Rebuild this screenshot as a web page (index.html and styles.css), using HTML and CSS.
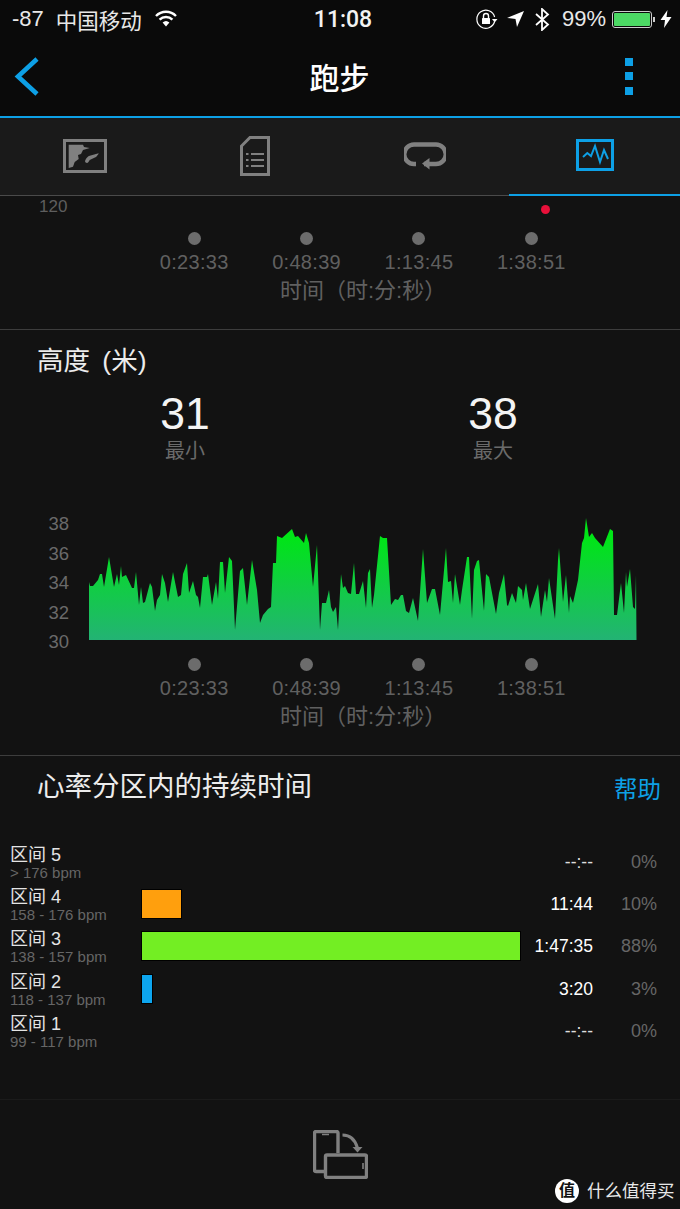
FILE: index.html
```html
<!DOCTYPE html>
<html lang="zh">
<head>
    <meta charset="UTF-8">
    <meta name="viewport" content="width=device-width, initial-scale=1.0">
    <title>跑步</title>
    <link rel="stylesheet" href="styles.css">
</head>
<body>

    <div class="top-bar">
        <div class="status">
            <div class="status-left">
                <span>-87</span>
                <span class="carrier">中国移动</span>
                <svg class="wifi" width="22" height="17" viewBox="0 0 22 17" fill="none" stroke="#fff" stroke-width="2.4">
                    <path d="M1 6 A14 14 0 0 1 21 6"/>
                    <path d="M4.6 9.6 A9 9 0 0 1 17.4 9.6"/>
                    <path d="M11 16.5 L7.6 12.6 A5 5 0 0 1 14.4 12.6 Z" fill="#fff" stroke="none"/>
                </svg>
            </div>
            <div class="status-time">11:08</div>
            <div class="status-right">
                <svg width="22" height="20" viewBox="0 0 22 20" fill="none" stroke="#fff" stroke-width="1.2">
                    <path d="M18.6 12.5 A9 9 0 1 1 18.6 8"/>
                    <path d="M16 10 L21.5 10 L18.7 13.4 Z" fill="#fff" stroke="none"/>
                    <path d="M7.5 9 V7 A2.5 2.5 0 0 1 12.5 7 V9" stroke-width="1.4"/>
                    <rect x="6" y="9" width="8" height="6" rx="0.5" fill="#fff" stroke="none"/>
                </svg>
                <svg class="loc" width="17" height="16" viewBox="0 0 17 16">
                    <path d="M17 0 L0 7 L8.5 8 L10 16 Z" fill="#fff"/>
                </svg>
                <svg class="bt" width="15" height="23" viewBox="0 0 15 23" fill="none" stroke="#fff" stroke-width="1.8">
                    <path d="M1 6 L13 16.5 L7 22 V1 L13 6.5 L1 17"/>
                </svg>
                <span class="battery-pct">99%</span>
                <div class="battery"><div class="battery-fill"></div></div>
                <svg class="bolt" width="12" height="18" viewBox="0 0 11 18">
                    <path d="M7 0 L0 10 H4.5 L3.5 18 L11 7 H6 Z" fill="#fff"/>
                </svg>
            </div>
        </div>
        <div class="nav">
            <svg class="back" width="26" height="41" viewBox="0 0 26 41" fill="none" stroke="#0da0e6" stroke-width="4.6">
                <path d="M23 3 L4 20.5 L23 38"/>
            </svg>
            <div class="nav-title">跑步</div>
            <div class="more"><i></i><i></i><i></i></div>
        </div>
    </div>

    <div class="tabs">
        <div class="tab">
            <svg width="44" height="34" viewBox="0 0 44 34">
                <rect x="1.5" y="1.5" width="41" height="31" fill="none" stroke="#808080" stroke-width="3"/>
                <path d="M5.7 5.7 H20 L21 8 L26.7 9 L20 11 L18 15 L15 16 L15.7 20 L11.7 23 L10 27.7 L5.7 29 Z" fill="#808080"/>
                <path d="M22 22 C23 19 25 17 26.7 16.7 L35.7 14.3 C35 16 34 17 33 18 L26.7 21 C26 22 25 24 24 24 C23 24 22 23 22 22 Z" fill="#808080"/>
            </svg>
        </div>
        <div class="tab">
            <svg width="30" height="40" viewBox="0 0 30 40" fill="none" stroke="#808080">
                <path d="M10 1.5 H28.5 V38.5 H1.5 V10 Z" stroke-width="3"/>
                <path d="M11 18 H24 M11 24 H24 M11 30 H24" stroke-width="2.2"/>
                <path d="M6 18 H8.5 M6 24 H8.5 M6 30 H8.5" stroke-width="2.2"/>
            </svg>
        </div>
        <div class="tab">
            <svg width="42" height="28" viewBox="0 0 42 28" fill="none" stroke="#808080" stroke-width="4.4">
                <path d="M12 22 H10 A9.5 9.5 0 0 1 10 2.5 H32 A9.5 9.5 0 0 1 32 22 H20"/>
                <path d="M18 21.5 L25.5 16 V27.5 Z" fill="#808080" stroke="none"/>
            </svg>
        </div>
        <div class="tab tab-active">
            <svg width="38" height="32" viewBox="0 0 38 32" fill="none" stroke="#0da0e6">
                <rect x="1.5" y="1.5" width="35" height="29" stroke-width="3"/>
                <path d="M7 18 L11.3 14 L15 17 L19 7 L24 23 L28 11 L32 20" stroke-width="2"/>
            </svg>
        </div>
    </div>

    <div class="section section-prev">
        <div class="prev-label">120</div>
        <span class="red-dot"></span>
        <div class="ticks">
            <div class="tick"><span class="dot"></span>0:23:33</div>
            <div class="tick"><span class="dot"></span>0:48:39</div>
            <div class="tick"><span class="dot"></span>1:13:45</div>
            <div class="tick"><span class="dot"></span>1:38:51</div>
        </div>
        <div class="axis-title">时间（时:分:秒）</div>
    </div>

    <div class="section section-alt">
        <div class="section-title">高度 (米)</div>
        <div class="stats">
            <div class="stat"><div class="stat-num">31</div><div class="stat-label">最小</div></div>
            <div class="stat"><div class="stat-num">38</div><div class="stat-label">最大</div></div>
        </div>
        <div class="chart">
            <div class="y-axis">
                <span>38</span><span>36</span><span>34</span><span>32</span><span>30</span>
            </div>
            <svg class="plot" width="549" height="125" viewBox="89 515 549 125">
                <defs>
                    <linearGradient id="altFill" x1="0" y1="0" x2="0" y2="1">
                        <stop offset="0.15" stop-color="#00e516"/>
                        <stop offset="1" stop-color="#23b374"/>
                    </linearGradient>
                </defs>
                <path fill="url(#altFill)" d="M89 640 L89 582 L90 586 L93 586 L98 580 L100 574 L102 574 L104 587 L109 557 L114 587 L117 574 L119 585 L121 566 L122 577 L126 575 L132 588 L134 588 L136 572 L139 605 L141 587 L143 603 L145 602 L150 583 L152 587 L155 611 L157 600 L160 595 L162 574 L165 583 L168 602 L173 572 L178 597 L181 595 L183 574 L187 563 L189 593 L193 581 L196 595 L198 597 L200 608 L203 577 L207 577 L208 574 L212 605 L216 582 L218 599 L220 562 L223 562 L225 593 L229 557 L232 561 L235 630 L240 571 L243 568 L247 605 L252 560 L257 590 L260 623 L263 615 L268 609 L271 607 L273 563 L276 563 L277 536 L282 538 L292 529 L295 537 L298 536 L304 543 L306 533 L309 543 L313 587 L317 545 L320 630 L322 603 L326 603 L329 590 L331 607 L333 612 L336 607 L338 630 L341 574 L343 588 L345 586 L348 593 L351 594 L354 563 L356 594 L359 594 L363 581 L366 608 L368 573 L370 569 L372 608 L374 595 L380 536 L383 538 L387 538 L391 605 L395 599 L398 600 L401 595 L403 595 L406 611 L409 613 L413 598 L418 621 L423 549 L427 603 L432 589 L435 589 L440 615 L446 548 L448 582 L451 581 L453 603 L455 574 L460 605 L462 590 L467 557 L469 557 L472 619 L474 570 L477 561 L479 560 L484 611 L486 574 L489 577 L496 614 L499 593 L504 574 L507 605 L508 606 L512 593 L516 603 L518 586 L522 590 L523 600 L526 583 L530 609 L538 584 L541 617 L545 590 L547 602 L549 578 L555 619 L558 560 L559 548 L563 602 L566 575 L569 613 L570 596 L573 603 L578 580 L582 543 L584 538 L586 518 L589 537 L592 533 L595 538 L603 547 L610 529 L613 531 L614 615 L617 615 L621 583 L624 613 L626 572 L627 587 L630 569 L633 607 L635 609 L636 575 L636.5 640 Z"/>
            </svg>
        </div>
        <div class="ticks ticks-alt">
            <div class="tick"><span class="dot"></span>0:23:33</div>
            <div class="tick"><span class="dot"></span>0:48:39</div>
            <div class="tick"><span class="dot"></span>1:13:45</div>
            <div class="tick"><span class="dot"></span>1:38:51</div>
        </div>
        <div class="axis-title">时间（时:分:秒）</div>
    </div>

    <div class="zones">
        <div class="zones-head">
            <div class="zones-title">心率分区内的持续时间</div>
            <div class="help">帮助</div>
        </div>
        <div class="zone">
            <div class="zone-name">区间 5<small>&gt; 176 bpm</small></div>
            <div></div>
            <div class="zone-time zone-empty">--:--</div>
            <div class="zone-pct">0%</div>
        </div>
        <div class="zone">
            <div class="zone-name">区间 4<small>158 - 176 bpm</small></div>
            <div><div class="bar bar-orange" style="width: 41px"></div></div>
            <div class="zone-time">11:44</div>
            <div class="zone-pct">10%</div>
        </div>
        <div class="zone">
            <div class="zone-name">区间 3<small>138 - 157 bpm</small></div>
            <div><div class="bar bar-green" style="width: 380px"></div></div>
            <div class="zone-time">1:47:35</div>
            <div class="zone-pct">88%</div>
        </div>
        <div class="zone">
            <div class="zone-name">区间 2<small>118 - 137 bpm</small></div>
            <div><div class="bar bar-blue" style="width: 12px"></div></div>
            <div class="zone-time">3:20</div>
            <div class="zone-pct">3%</div>
        </div>
        <div class="zone">
            <div class="zone-name">区间 1<small>99 - 117 bpm</small></div>
            <div></div>
            <div class="zone-time zone-empty">--:--</div>
            <div class="zone-pct">0%</div>
        </div>
    </div>

    <div class="footer">
        <svg width="55" height="49" viewBox="0 0 55 49" fill="none" stroke="#808080" stroke-width="3.4">
            <path d="M11 41.5 H3 A1.5 1.5 0 0 1 1.5 40 V3 A1.5 1.5 0 0 1 3 1.5 H23.5 A1.5 1.5 0 0 1 25 3 V23"/>
            <rect x="12.5" y="25" width="41" height="22.5" rx="1.5"/>
            <path d="M29.5 5 C37 5 42 9 44.5 18" stroke-width="3"/>
            <path d="M39.5 17 H49.5 L44.5 22.5 Z" fill="#808080" stroke="none"/>
            <path d="M9 4.5 H16 M50 33 V39" stroke-width="1.6"/>
        </svg>
    </div>

    <div class="watermark">
        <span class="wm-logo">值</span>
        <span>什么值得买</span>
    </div>

</body>
</html>
```

FILE: styles.css
```css
* {
    margin: 0;
    padding: 0;
    box-sizing: border-box;
    font-family: "Liberation Sans", "Noto Sans CJK SC", sans-serif;
}

html, body {
    height: 1209px;
    overflow: hidden;
}

body {
    position: relative;
    background: #121212;
    color: #fff;
}

.top-bar {
    height: 118px;
    background: #0a0a0a;
    border-bottom: 2px solid #0da0e6;
}

.status {
    display: grid;
    grid-template-columns: 1fr auto 1fr;
    align-items: center;
    height: 38px;
    padding: 0 8px 0 12px;
    font-size: 22px;
}

.status-left {
    display: flex;
    align-items: center;
    color: #e8e8e8;
}

.carrier {
    margin-left: 12px;
    margin-right: 13px;
    font-size: 21.5px;
}

.wifi {
    margin-top: -2px;
}

.status-time {
    font-family: Roboto, "Liberation Sans", sans-serif;
    font-weight: 500;
    font-size: 23px;
    padding-left: 2px;
    color: #f2f2f2;
}

.status-right {
    display: flex;
    align-items: center;
    justify-content: flex-end;
    color: #e8e8e8;
}

.loc {
    margin-left: 9px;
}

.bt {
    margin-left: 11px;
}

.battery-pct {
    margin-left: 12px;
    margin-right: 6px;
}

.battery {
    position: relative;
    width: 40px;
    height: 17px;
    border: 1px solid #ccc;
    border-radius: 3px;
    padding: 1px;
}

.battery::after {
    content: "";
    position: absolute;
    right: -4px;
    top: 5px;
    width: 2px;
    height: 5px;
    background: #ccc;
}

.battery-fill {
    height: 100%;
    background: #4cd964;
    border-radius: 1px;
}

.bolt {
    margin-left: 8px;
}

.nav {
    display: grid;
    grid-template-columns: 1fr auto 1fr;
    align-items: center;
    height: 76px;
    padding: 0 47px 0 14px;
}

.nav-title {
    font-size: 30px;
    font-weight: 500;
    position: relative;
    left: 16px;
}

.more {
    justify-self: end;
    display: flex;
    flex-direction: column;
    gap: 6.5px;
}

.more i {
    display: block;
    width: 8px;
    height: 8px;
    background: #0da0e6;
}

.tabs {
    display: grid;
    grid-template-columns: repeat(4, 1fr);
    height: 78px;
    background: #1a1a1a;
    border-bottom: 1px solid #4a4a4a;
}

.tab {
    display: flex;
    align-items: center;
    justify-content: center;
    padding-bottom: 3px;
}

.tab-active {
    height: 78px;
    margin-left: -1px;
    border-bottom: 2px solid #0da0e6;
    padding-bottom: 2px;
}

.section {
    position: relative;
    border-bottom: 1px solid #3d3d3d;
}

.section-prev {
    height: 134px;
    padding-top: 1px;
}

.section-alt {
    height: 426px;
    padding-top: 14px;
}

.prev-label {
    padding-left: 39px;
    font-size: 17px;
    line-height: 20px;
    color: #5e5e5e;
}

.red-dot {
    position: absolute;
    left: 541px;
    top: 9px;
    width: 9px;
    height: 9px;
    border-radius: 50%;
    background: #e8103a;
}

.ticks {
    display: flex;
    margin: 15px 0 0 138px;
}

.ticks-alt {
    margin-top: 6px;
}

.tick {
    display: flex;
    flex-direction: column;
    align-items: center;
    width: 112.4px;
    font-size: 20px;
    letter-spacing: 0.3px;
    line-height: 24px;
    color: #606060;
}

.dot {
    width: 13px;
    height: 13px;
    margin-bottom: 5px;
    border-radius: 50%;
    background: #6c6c6c;
}

.axis-title {
    margin-top: 3px;
    padding-left: 280px;
    font-size: 22px;
    line-height: 28px;
    color: #606060;
}

.section-title {
    padding-left: 37px;
    font-size: 26.5px;
    word-spacing: 5px;
    line-height: 34px;
    color: #ececec;
}

.stats {
    display: flex;
    gap: 108px;
    margin: 11px 0 0 85px;
}

.stat {
    width: 200px;
    text-align: center;
}

.stat-num {
    font-size: 44.5px;
    line-height: 50px;
    color: #f4f4f4;
}

.stat-label {
    margin-top: -1px;
    font-size: 20px;
    line-height: 26px;
    color: #6a6a6a;
}

.chart {
    display: flex;
    align-items: flex-start;
    height: 138px;
    margin-top: 50px;
}

.y-axis {
    display: flex;
    flex-direction: column;
    justify-content: space-between;
    width: 89px;
    height: 138px;
    padding: 0 20px 0 0;
    font-size: 18.5px;
    line-height: 20px;
    text-align: right;
    color: #6a6a6a;
}

.plot {
    display: block;
    margin-top: 1px;
}

.zones {
    height: 344px;
    padding-top: 13px;
    border-bottom: 1px solid #1b1b1b;
}

.zones-head {
    display: flex;
    justify-content: space-between;
    height: 75px;
    padding: 0 19px 0 37px;
}

.zones-title {
    font-size: 27.5px;
    line-height: 36px;
    color: #ececec;
}

.help {
    font-size: 23.5px;
    line-height: 42px;
    color: #0da0e6;
}

.zone {
    display: grid;
    grid-template-columns: 132px 378px 73px 64px;
    height: 42.2px;
    padding-left: 10px;
}

.zone-name {
    font-size: 18px;
    line-height: 22px;
    color: #e4e4e4;
}

.zone-name small {
    display: block;
    font-size: 15px;
    line-height: 14px;
    color: #666;
}

.bar {
    height: 30px;
    margin: 3px 0 0 -1px;
    border: 1px solid #000;
}

.bar-orange {
    background: #ff9f0d;
}

.bar-green {
    background: #73ee23;
}

.bar-blue {
    background: #0da5ee;
}

.zone-time,
.zone-pct {
    font-size: 17.5px;
    line-height: 36px;
    text-align: right;
}

.zone-empty {
    color: #ddd;
}

.zone-pct {
    font-size: 18px;
    color: #666;
}

.footer {
    display: flex;
    justify-content: center;
    padding-top: 30px;
}

.watermark {
    position: absolute;
    left: 555px;
    top: 1179px;
    display: flex;
    align-items: center;
    gap: 8px;
    font-size: 17.5px;
    line-height: 24px;
    color: #e8e8e8;
}

.wm-logo {
    display: flex;
    align-items: center;
    justify-content: center;
    width: 24px;
    height: 24px;
    border-radius: 50%;
    background: #fff;
    color: #111;
    font-size: 16px;
    font-weight: bold;
}
```
